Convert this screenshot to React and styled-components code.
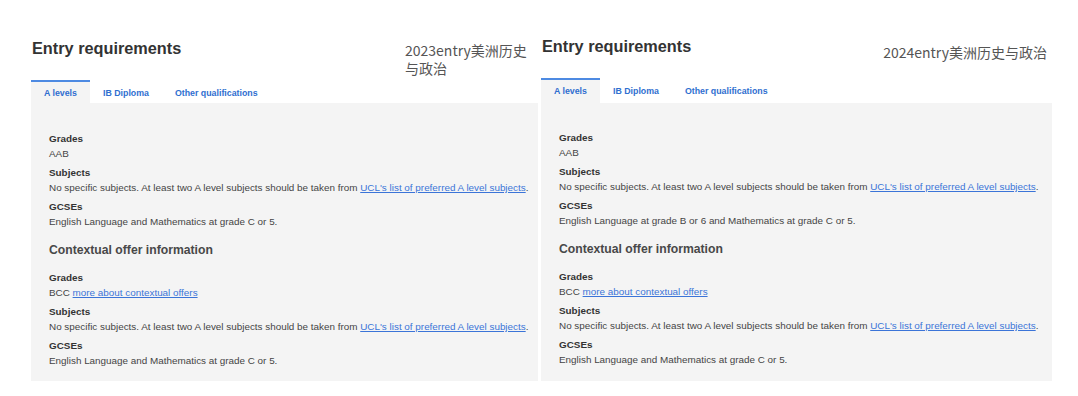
import React from "react";
import styled, { createGlobalStyle } from "styled-components";

const Global = createGlobalStyle`
  html, body { margin: 0; padding: 0; background: #fff; }
  body { font-family: "Liberation Sans", Arial, sans-serif; color: #333; }
`;

const Page = styled.div`
  display: flex;
  gap: 3px;
  padding-left: 31px;
  width: 1078px;
  height: 396px;
  box-sizing: border-box;
`;

const Panel = styled.section`
  display: flex;
  flex-direction: column;
  width: ${(p) => p.$width}px;
  padding-top: ${(p) => p.$top}px;
`;

const Header = styled.div`
  display: flex;
  justify-content: space-between;
  align-items: flex-start;
  height: 42px;
`;

const Title = styled.h2`
  margin: 0 0 0 1px;
  font-size: 16.3px;
  line-height: 20px;
  font-weight: bold;
  color: #333;
`;

const Caption = styled.div`
  font-family: "Noto Sans CJK SC", "Noto Sans", sans-serif;
  font-size: 14px;
  line-height: 17.5px;
  color: #555;
  max-width: ${(p) => p.$max}px;
  margin-top: ${(p) => p.$offset}px;
  margin-right: ${(p) => p.$right}px;
`;

const Tabs = styled.div`
  display: flex;
  height: ${(p) => p.$height}px;
`;

const Tab = styled.div`
  box-sizing: border-box;
  height: 100%;
  padding: 6px 13px 0;
  min-width: ${(p) => (p.$active ? 59 : 0)}px;
  display: flex;
  align-items: flex-start;
  justify-content: center;
  font-size: 8.8px;
  line-height: 11px;
  font-weight: bold;
  color: #2f6fd0;
  background: ${(p) => (p.$active ? "#f4f4f4" : "transparent")};
  border-top: 2px solid ${(p) => (p.$active ? "#4d8ae2" : "transparent")};
`;

const Body = styled.div`
  background: #f4f4f4;
  padding: ${(p) => p.$pad}px 0 0 18px;
  height: 278px;
  box-sizing: border-box;
`;

const Item = styled.div`
  margin-bottom: 4px;
`;

const Label = styled.div`
  font-size: 9.9px;
  line-height: 15px;
  font-weight: bold;
  color: #333;
`;

const Value = styled.div`
  font-size: 9.9px;
  line-height: 15px;
  color: #444;
  white-space: nowrap;
`;

const Link = styled.a`
  color: #3b74d8;
  text-decoration: underline;
`;

const Section = styled.h3`
  margin: 13px 0 12px;
  font-size: 12.2px;
  line-height: 16px;
  font-weight: bold;
  color: #484848;
`;

const subjects = (
  <>
    No specific subjects. At least two A level subjects should be taken from{" "}
    <Link href="#">UCL's list of preferred A level subjects</Link>.
  </>
);

const Requirements = ({ gcse, year, width, top, tabH, pad, caption }) => (
  <Panel $width={width} $top={top}>
    <Header>
      <Title>Entry requirements</Title>
      <Caption $max={caption.max} $offset={caption.offset} $right={caption.right}>
        {year}entry美洲历史与政治
      </Caption>
    </Header>
    <Tabs $height={tabH}>
      <Tab $active>A levels</Tab>
      <Tab>IB Diploma</Tab>
      <Tab>Other qualifications</Tab>
    </Tabs>
    <Body $pad={pad}>
      <Item>
        <Label>Grades</Label>
        <Value>AAB</Value>
      </Item>
      <Item>
        <Label>Subjects</Label>
        <Value>{subjects}</Value>
      </Item>
      <Item>
        <Label>GCSEs</Label>
        <Value>{gcse}</Value>
      </Item>
      <Section>Contextual offer information</Section>
      <Item>
        <Label>Grades</Label>
        <Value>
          BCC <Link href="#">more about contextual offers</Link>
        </Value>
      </Item>
      <Item>
        <Label>Subjects</Label>
        <Value>{subjects}</Value>
      </Item>
      <Item>
        <Label>GCSEs</Label>
        <Value>English Language and Mathematics at grade C or 5.</Value>
      </Item>
    </Body>
  </Panel>
);

export default function App() {
  return (
    <>
      <Global />
      <Page>
        <Requirements
          year="2023"
          width={507}
          top={38}
          tabH={23}
          pad={28}
          gcse="English Language and Mathematics at grade C or 5."
          caption={{ max: 124, offset: 4, right: 9 }}
        />
        <Requirements
          year="2024"
          width={511}
          top={36}
          tabH={25}
          pad={27}
          gcse="English Language at grade B or 6 and Mathematics at grade C or 5."
          caption={{ max: 300, offset: 8, right: 5 }}
        />
      </Page>
    </>
  );
}
